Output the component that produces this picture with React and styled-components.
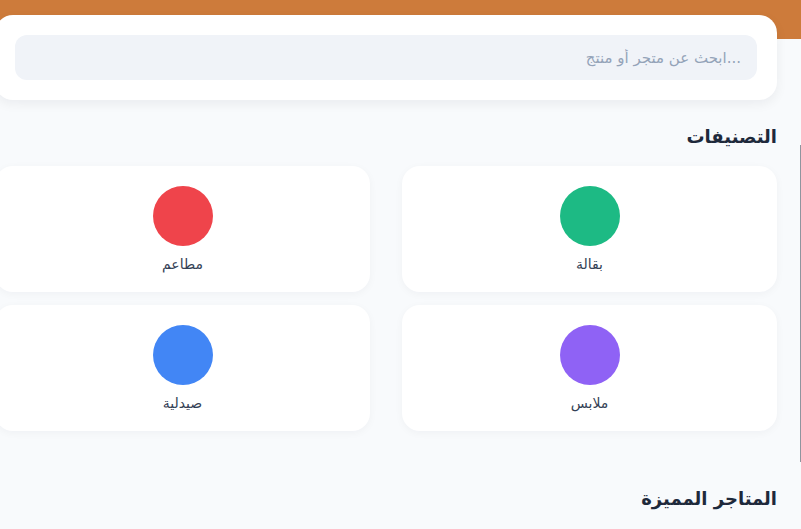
import styled, { createGlobalStyle } from 'styled-components'

const GlobalStyle = createGlobalStyle`
	* {
		box-sizing: border-box;
	}
	html, body {
		margin: 0;
		padding: 0;
		background: #f8fafc;
		font-family: "DejaVu Sans", "Noto Sans", sans-serif;
	}
	body {
		overflow: hidden;
	}
`

const Page = styled.div`
	direction: rtl;
	min-height: 529px;
	background: #f8fafc;
	overflow: hidden;
`

const Header = styled.header`
	height: 39px;
	background: #cd7b3b;
`

const Main = styled.main`
	margin-top: -24px;
	margin-left: -5px;
	padding-right: 24px;
	display: flex;
	flex-direction: column;
`

const SearchCard = styled.div`
	background: #fff;
	border-radius: 18px;
	padding: 20px;
	box-shadow: 0 4px 12px rgba(15, 23, 42, 0.06);
`

const SearchInput = styled.input`
	width: 100%;
	height: 45px;
	border: none;
	outline: none;
	border-radius: 12px;
	background: #f0f3f8;
	padding: 0 16px;
	font-family: inherit;
	font-size: 15px;
	color: #1e293b;
	direction: ltr;
	text-align: right;
	&::placeholder {
		color: #94a3b8;
	}
`

const SectionTitle = styled.h2`
	margin: ${props => props.$top}px 0 15px;
	font-size: 18px;
	line-height: 28px;
	font-weight: 700;
	color: #1e293b;
`

const Grid = styled.div`
	display: grid;
	grid-template-columns: 1fr 1fr;
	column-gap: 32px;
	row-gap: 13px;
`

const CategoryCard = styled.div`
	background: #fff;
	border-radius: 18px;
	padding: 20px 0 18px;
	display: flex;
	flex-direction: column;
	align-items: center;
	gap: 8px;
	box-shadow: 0 2px 8px rgba(15, 23, 42, 0.04);
`

const Dot = styled.div`
	width: 60px;
	height: 60px;
	border-radius: 50%;
	background: ${props => props.$color};
`

const Label = styled.span`
	font-size: 14px;
	line-height: 20px;
	font-weight: 500;
	color: #334155;
`

const ScrollThumb = styled.div`
	position: fixed;
	right: 0;
	top: 145px;
	width: 1px;
	height: 317px;
	background: #8f959e;
`

const categories = [
	{ name: 'بقالة', color: '#1dba84' },
	{ name: 'مطاعم', color: '#ef444b' },
	{ name: 'ملابس', color: '#8f62f5' },
	{ name: 'صيدلية', color: '#4286f5' },
]

export default function App() {
	return (
		<Page>
			<GlobalStyle />
			<Header />
			<Main>
				<SearchCard>
					<SearchInput placeholder="ابحث عن متجر أو منتج..." />
				</SearchCard>
				<SectionTitle $top={23}>التصنيفات</SectionTitle>
				<Grid>
					{categories.map(c => (
						<CategoryCard key={c.name}>
							<Dot $color={c.color} />
							<Label>{c.name}</Label>
						</CategoryCard>
					))}
				</Grid>
				<SectionTitle $top={54}>المتاجر المميزة</SectionTitle>
			</Main>
			<ScrollThumb />
		</Page>
	)
}
